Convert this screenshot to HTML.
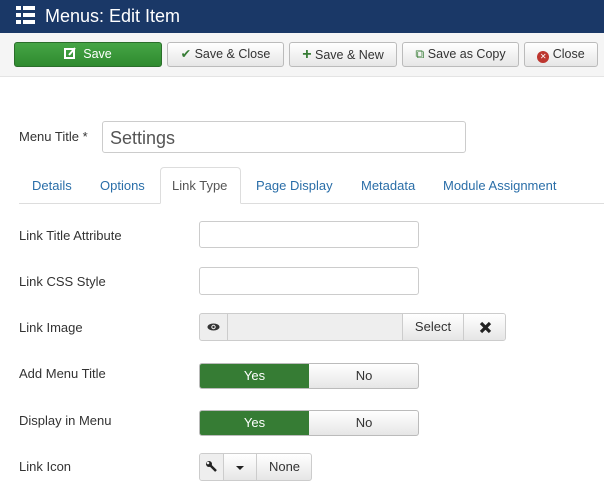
<!DOCTYPE html>
<html><head><style>
*{box-sizing:border-box}
body{margin:0;width:604px;height:487px;overflow:hidden;background:#fff;font-family:"Liberation Sans",sans-serif;font-size:13px;color:#333;position:relative}
.hdr{position:absolute;left:0;top:0;width:604px;height:33px;background:#1a3867;color:#fff;font-size:18px}
.hdr span{position:absolute;left:45px;top:6px}
.tb{position:absolute;left:0;top:33px;width:604px;height:44px;background:#f5f5f5;border-bottom:1px solid #e4e4e4}
.b{position:absolute;top:9px;height:25px;border:1px solid #bbb;border-radius:3px;background:linear-gradient(#fff,#e6e6e6);font-size:12.5px;line-height:23px;text-align:center;color:#333}
.b.g{background:linear-gradient(#46a546,#2f8a2f);border-color:#2a6e2a;color:#fff}
.a{position:absolute}
.in{position:absolute;border:1px solid #ccc;border-radius:3px;background:#fff}
.tab{position:absolute;top:178px;color:#2a6ea8;font-size:13px}
.yn{position:absolute;left:199px;width:220px;height:26px;border:1px solid #bbb;border-radius:3px;overflow:hidden;background:linear-gradient(#fff,#e6e6e6)}
.yn .y{position:absolute;left:0;top:0;width:109px;height:100%;background:#367c34;color:#fff;text-align:center;line-height:24px}
.yn .n{position:absolute;left:110px;top:0;right:0;text-align:center;line-height:24px}
</style></head><body>
<div class="hdr">
<svg class="a" style="left:16px;top:6px" width="19" height="18"><rect x="0" y="0" width="5" height="4" fill="#fff"/><rect x="7" y="0" width="12" height="4" fill="#fff"/><rect x="0" y="7" width="5" height="4" fill="#fff"/><rect x="7" y="7" width="12" height="4" fill="#fff"/><rect x="0" y="14" width="5" height="4" fill="#fff"/><rect x="7" y="14" width="12" height="4" fill="#fff"/></svg>
<span>Menus: Edit Item</span></div>
<div class="tb">
<div class="b g" style="left:14px;width:148px"><svg width="12" height="12" style="vertical-align:-1px"><rect x="1" y="2" width="9" height="9" fill="none" stroke="#fff" stroke-width="2"/><path d="M5 8 L11 1" stroke="#fff" stroke-width="2"/></svg>&nbsp; Save</div>
<div class="b" style="left:167px;width:117px"><span style="color:#367c34">&#10004;</span> Save &amp; Close</div>
<div class="b" style="left:289px;width:108px"><b style="color:#367c34;font-size:16px">+</b> Save &amp; New</div>
<div class="b" style="left:402px;width:117px"><span style="color:#367c34">&#10697;</span> Save as Copy</div>
<div class="b" style="left:524px;width:74px"><span style="display:inline-block;width:12px;height:12px;border-radius:50%;background:#bd362f;color:#fff;font-size:8px;line-height:12px;vertical-align:-1px">&#10005;</span> Close</div>
</div>
<div class="a" style="left:19px;top:129px">Menu Title *</div>
<div class="in" style="left:102px;top:121px;width:364px;height:32px;font-size:18px;color:#555;padding:6px 0 0 7px">Settings</div>
<div class="a" style="left:19px;top:203px;width:585px;height:1px;background:#ddd"></div>
<div class="a" style="left:160px;top:167px;width:81px;height:37px;border:1px solid #ddd;border-bottom:1px solid #fff;border-radius:4px 4px 0 0;background:#fff"></div>
<div class="tab" style="left:32px">Details</div>
<div class="tab" style="left:100px">Options</div>
<div class="tab" style="left:172px;color:#555">Link Type</div>
<div class="tab" style="left:256px">Page Display</div>
<div class="tab" style="left:361px">Metadata</div>
<div class="tab" style="left:443px">Module Assignment</div>
<div class="a" style="left:19px;top:228px">Link Title Attribute</div>
<div class="in" style="left:199px;top:221px;width:220px;height:27px"></div>
<div class="a" style="left:19px;top:274px">Link CSS Style</div>
<div class="in" style="left:199px;top:267px;width:220px;height:28px"></div>
<div class="a" style="left:19px;top:320px">Link Image</div>
<div class="in" style="left:199px;top:313px;width:307px;height:28px;background:#eee;overflow:hidden">
<div class="a" style="left:0;top:0;width:28px;height:26px;border-right:1px solid #ccc"><svg class="a" style="left:7px;top:9px" width="13" height="8"><ellipse cx="6.5" cy="4" rx="6" ry="3.5" fill="#333"/><circle cx="6.5" cy="4" r="2.2" fill="#eee"/><circle cx="6.5" cy="4" r="1.2" fill="#333"/></svg></div>
<div class="a" style="left:202px;top:0;width:61px;height:26px;border-left:1px solid #ccc;background:linear-gradient(#fff,#e6e6e6);text-align:center;line-height:26px">Select</div>
<div class="a" style="left:263px;top:0;width:43px;height:26px;border-left:1px solid #ccc;background:linear-gradient(#fff,#e6e6e6)"><svg class="a" style="left:15px;top:7px" width="13" height="13"><path d="M2 2 L11 11 M11 2 L2 11" stroke="#222" stroke-width="3.2"/></svg></div>
</div>
<div class="a" style="left:19px;top:366px">Add Menu Title</div>
<div class="yn" style="top:363px"><div class="y">Yes</div><div class="n">No</div></div>
<div class="a" style="left:19px;top:413px">Display in Menu</div>
<div class="yn" style="top:410px"><div class="y">Yes</div><div class="n">No</div></div>
<div class="a" style="left:19px;top:459px">Link Icon</div>
<div class="in" style="left:199px;top:453px;width:113px;height:28px;background:linear-gradient(#fff,#e6e6e6);overflow:hidden">
<div class="a" style="left:0;top:0;width:24px;height:26px;background:#eee;border-right:1px solid #ccc"><svg class="a" style="left:6px;top:7px" width="12" height="12"><path d="M2 2 L10 10" stroke="#222" stroke-width="2.5"/><circle cx="3" cy="3" r="3" fill="#222"/><circle cx="2" cy="2" r="1.3" fill="#eee"/></svg></div>
<div class="a" style="left:24px;top:0;width:33px;height:26px;border-right:1px solid #ccc"><svg class="a" style="left:12px;top:12px" width="8" height="4"><path d="M0 0 L8 0 L4 4Z" fill="#222"/></svg></div>
<div class="a" style="left:57px;top:0;width:55px;height:26px;text-align:center;line-height:26px">None</div>
</div>
</body></html>
